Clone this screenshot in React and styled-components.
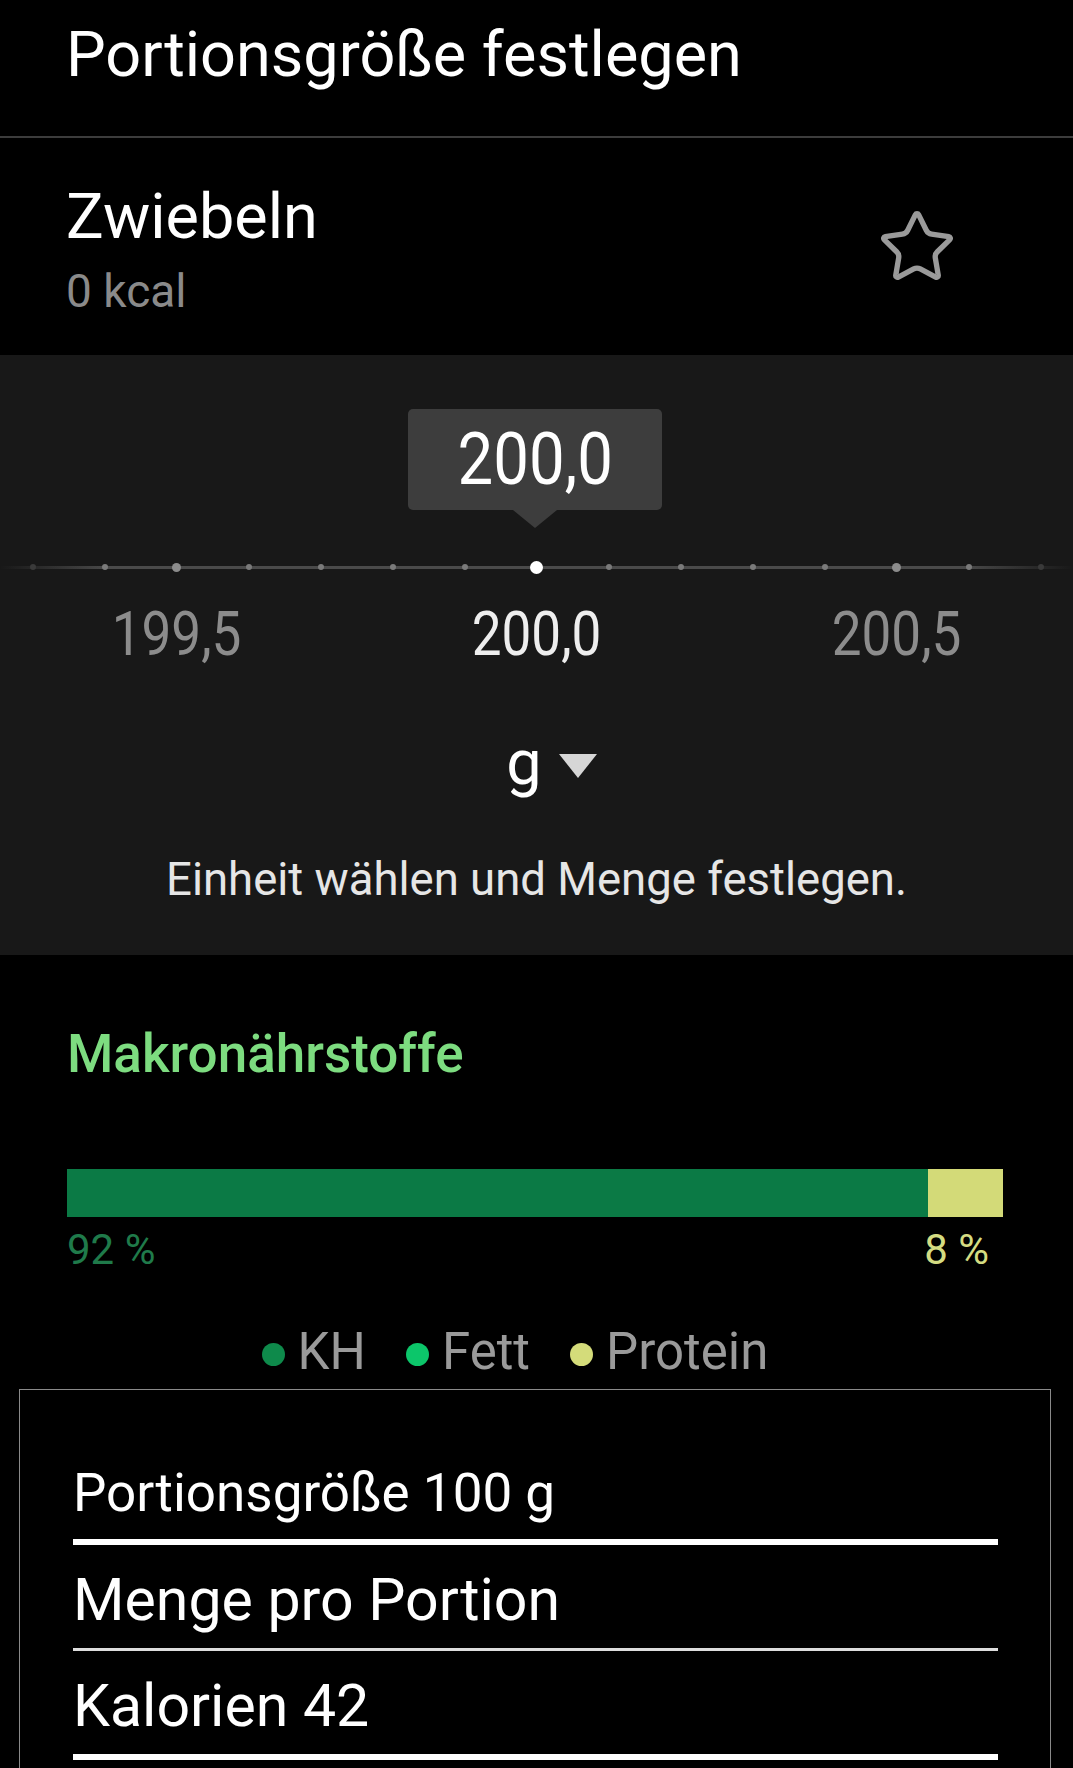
import styled, { createGlobalStyle } from "styled-components";
import { Star } from "lucide-react";

const GlobalStyle = createGlobalStyle`
  body {
    margin: 0;
    background: #000;
    font-family: Roboto, "Liberation Sans", sans-serif;
    color: #fff;
  }
`;

const TICKS = [-7, -6, -5, -4, -3, -2, -1, 0, 1, 2, 3, 4, 5, 6, 7];

const App = () => {
  return (
    <Screen>
      <GlobalStyle />
      <Header>
        <Title>Portionsgröße festlegen</Title>
      </Header>

      <FoodRow>
        <FoodInfo>
          <FoodName>Zwiebeln</FoodName>
          <FoodKcal>0 kcal</FoodKcal>
        </FoodInfo>
        <StarWrap>
          <Star size={80} strokeWidth={1.6} color="#9a9a9a" />
        </StarWrap>
      </FoodRow>

      <Picker>
        <Bubble>
          <Cond>200,0</Cond>
        </Bubble>
        <Ruler>
          {TICKS.map((k) => (
            <TickCell key={k}>
              <Dot $kind={k === 0 ? "active" : Math.abs(k) === 5 ? "major" : Math.abs(k) === 7 ? "faint" : "minor"} />
            </TickCell>
          ))}
        </Ruler>
        <Labels>
          <Label>
            <Cond>199,5</Cond>
          </Label>
          <Label $active>
            <Cond>200,0</Cond>
          </Label>
          <Label>
            <Cond>200,5</Cond>
          </Label>
        </Labels>
        <UnitRow>
          <Unit>g</Unit>
          <Caret />
        </UnitRow>
        <Hint>Einheit wählen und Menge festlegen.</Hint>
      </Picker>

      <Macros>
        <SectionTitle>Makronährstoffe</SectionTitle>
        <Bar>
          <Segment style={{ width: "92%" }} $color="#0b7a45" />
          <Segment style={{ width: "8%" }} $color="#d3da78" />
        </Bar>
        <Percents>
          <Percent $color="#1f7a4a">92 %</Percent>
          <Percent $color="#d4dc82">8 %</Percent>
        </Percents>
        <Legend>
          <LegendItem>
            <LegendDot $color="#0e8a4b" />
            KH
          </LegendItem>
          <LegendItem>
            <LegendDot $color="#0cc66a" />
            Fett
          </LegendItem>
          <LegendItem>
            <LegendDot $color="#d4dc7a" />
            Protein
          </LegendItem>
        </Legend>
      </Macros>

      <FactsBox>
        <FactRow $size={53} $rule={6} $top={0}>
          Portionsgröße 100 g
        </FactRow>
        <FactRow $size={59} $rule={3} $top={20}>
          Menge pro Portion
        </FactRow>
        <FactRow $size={59} $rule={6} $top={20}>
          Kalorien 42
        </FactRow>
      </FactsBox>
    </Screen>
  );
};

export default App;

const Screen = styled.div`
  width: 1073px;
  min-height: 1768px;
  background: #000;
  overflow: hidden;
`;

const Header = styled.header`
  padding: 19px 66px 45px;
  border-bottom: 2px solid #3c3c3c;
`;

const Title = styled.h1`
  margin: 0;
  font-size: 63px;
  line-height: 72px;
  font-weight: 400;
  color: #fff;
`;

const FoodRow = styled.div`
  display: flex;
  align-items: center;
  justify-content: space-between;
  padding: 43px 116px 38px 66px;
`;

const FoodInfo = styled.div`
  display: flex;
  flex-direction: column;
  gap: 12px;
`;

const FoodName = styled.div`
  font-size: 63px;
  line-height: 72px;
  color: #fff;
`;

const FoodKcal = styled.div`
  font-size: 46px;
  line-height: 52px;
  color: #8a8a8a;
`;

const StarWrap = styled.div`
  display: flex;
  margin-top: -4px;
`;

const Picker = styled.section`
  background: #181818;
  padding: 54px 0 49px;
  display: flex;
  flex-direction: column;
  align-items: center;
`;

const Cond = styled.span`
  display: inline-block;
  transform: scaleX(0.87);
`;

const Bubble = styled.div`
  position: relative;
  width: 254px;
  height: 101px;
  margin-left: -3px;
  background: #3d3d3d;
  border-radius: 5px;
  text-align: center;
  font-size: 73px;
  line-height: 101px;
  color: #fff;

  &::after {
    content: "";
    position: absolute;
    left: 50%;
    top: 100%;
    transform: translateX(-50%);
    border-left: 22px solid transparent;
    border-right: 22px solid transparent;
    border-top: 18px solid #3d3d3d;
  }
`;

const Ruler = styled.div`
  width: 100%;
  height: 24px;
  margin-top: 45px;
  display: flex;
  justify-content: center;
  overflow: hidden;
  background: linear-gradient(
      to right,
      rgba(74, 74, 74, 0) 0,
      #4a4a4a 110px,
      #4a4a4a 963px,
      rgba(74, 74, 74, 0) 100%
    )
    center / 100% 3px no-repeat;
`;

const TickCell = styled.div`
  flex: 0 0 72px;
  display: flex;
  align-items: center;
  justify-content: center;
`;

const dotSize = { active: 13, major: 9, minor: 6, faint: 6 };
const dotColor = { active: "#fff", major: "#8c8c8c", minor: "#7a7a7a", faint: "#3a3a3a" };

const Dot = styled.span`
  width: ${(p) => dotSize[p.$kind]}px;
  height: ${(p) => dotSize[p.$kind]}px;
  border-radius: 50%;
  background: ${(p) => dotColor[p.$kind]};
`;

const Labels = styled.div`
  width: 100%;
  margin-top: 20px;
  display: flex;
  justify-content: center;
  overflow: hidden;
`;

const Label = styled.div`
  flex: 0 0 360px;
  text-align: center;
  font-size: 61px;
  line-height: 70px;
  color: ${(p) => (p.$active ? "#eeeeee" : "#8c8c8c")};
`;

const UnitRow = styled.div`
  margin-top: 58px;
  padding-left: 30px;
  display: flex;
  align-items: center;
  gap: 17px;
`;

const Unit = styled.span`
  font-size: 63px;
  line-height: 72px;
  color: #fff;
`;

const Caret = styled.span`
  margin-top: 6px;
  width: 0;
  height: 0;
  border-left: 19px solid transparent;
  border-right: 19px solid transparent;
  border-top: 24px solid #d6d6d6;
`;

const Hint = styled.p`
  margin: 55px 0 0;
  font-size: 45.5px;
  line-height: 52px;
  color: #e6e6e6;
`;

const Macros = styled.section`
  padding: 69px 70px 0 67px;
`;

const SectionTitle = styled.h2`
  margin: 0;
  font-size: 53px;
  line-height: 61px;
  font-weight: 500;
  color: #7ddc80;
`;

const Bar = styled.div`
  margin-top: 84px;
  height: 48px;
  display: flex;
`;

const Segment = styled.div`
  height: 100%;
  background: ${(p) => p.$color};
`;

const Percents = styled.div`
  margin-top: 8px;
  padding-right: 14px;
  display: flex;
  justify-content: space-between;
`;

const Percent = styled.span`
  font-size: 42px;
  line-height: 50px;
  color: ${(p) => p.$color};
`;

const Legend = styled.div`
  margin-top: 48px;
  padding-right: 40px;
  display: flex;
  justify-content: center;
  gap: 40px;
`;

const LegendItem = styled.div`
  display: flex;
  align-items: center;
  gap: 13px;
  font-size: 51px;
  line-height: 58px;
  color: #9a9a9a;
`;

const LegendDot = styled.span`
  width: 23px;
  height: 23px;
  margin-top: 4px;
  border-radius: 50%;
  background: ${(p) => p.$color};
`;

const FactsBox = styled.section`
  margin: 8px 22px 0 19px;
  border: 1px solid #8a8a8a;
  padding: 72px 52px 60px 53px;
`;

const FactRow = styled.div`
  padding-top: ${(p) => p.$top}px;
  padding-bottom: 14px;
  border-bottom: ${(p) => p.$rule}px solid ${(p) => (p.$rule > 4 ? "#fff" : "#dddddd")};
  font-size: ${(p) => p.$size}px;
  line-height: ${(p) => p.$size + 10}px;
  color: #fff;
`;
